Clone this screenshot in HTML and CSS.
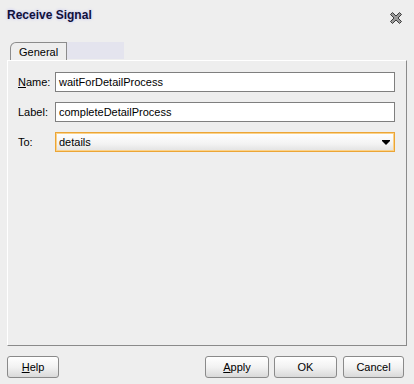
FILE: index.html
```html
<!DOCTYPE html>
<html lang="en">
<head>
    <meta charset="UTF-8">
    <title>Receive Signal</title>
    <link rel="stylesheet" href="styles.css">
</head>
<body>
    <div class="dialog">
        <!-- Barra de título -->
        <div class="titlebar">
            <span class="title">Receive Signal</span>
            <svg class="close" width="14" height="14" viewBox="0 0 14 14">
                <path d="M1.5 3.5 L3.5 1.5 L7 5 L10.5 1.5 L12.5 3.5 L9 7 L12.5 10.5 L10.5 12.5 L7 9 L3.5 12.5 L1.5 10.5 L5 7 Z" fill="#9a9a9a" stroke="#3c3c3c" stroke-width="1"/>
            </svg>
        </div>

        <!-- Pestañas -->
        <div class="tabs">
            <div class="tab">General</div>
            <div class="tab-fill"></div>
        </div>

        <!-- Panel principal -->
        <div class="panel">
            <div class="form">
                <label class="field-label"><u>N</u>ame:</label>
                <div class="input">waitForDetailProcess</div>

                <label class="field-label">Label:</label>
                <div class="input">completeDetailProcess</div>

                <label class="field-label">To:</label>
                <div class="select">
                    <span>details</span>
                    <svg width="8" height="5" viewBox="0 0 8 5">
                        <path d="M0 0 H8 V1 L4 5 L0 1 Z" fill="#000"/>
                    </svg>
                </div>
            </div>
        </div>

        <!-- Botones -->
        <div class="buttons">
            <button class="btn btn-help"><u>H</u>elp</button>
            <div class="spacer"></div>
            <button class="btn btn-apply"><u>A</u>pply</button>
            <button class="btn btn-ok">OK</button>
            <button class="btn btn-cancel">Cancel</button>
        </div>
    </div>
</body>
</html>
```

FILE: styles.css
```css
/* Estilos generales */
body {
    margin: 0;
    background-color: #eeeeee;
    font-family: 'Liberation Sans', Arial, sans-serif;
    font-size: 11px;
    color: #000;
}

.dialog {
    width: 414px;
    height: 384px;
    box-sizing: border-box;
    padding: 0 7px 0 7px;
    display: flex;
    flex-direction: column;
}

/* Barra de título */
.titlebar {
    height: 42px;
    display: flex;
    justify-content: space-between;
    align-items: flex-start;
    padding-top: 8px;
    box-sizing: border-box;
}

.title {
    font-size: 12px;
    font-weight: bold;
    color: #10103a;
    text-shadow: 0 0 3px rgba(120, 120, 255, 0.45);
}

.close {
    margin-top: 3px;
    margin-right: 4px;
}

/* Pestañas */
.tabs {
    display: flex;
    height: 18px;
    margin-left: 3px;
}

.tab {
    width: 57px;
    box-sizing: border-box;
    border: 1px solid #8c8c8c;
    border-bottom: none;
    border-top-left-radius: 6px;
    background-color: #eeeeee;
    padding: 2px 0 0 8px;
    line-height: 14px;
}

.tab-fill {
    width: 57px;
    height: 17px;
    background-color: #e4e4ee;
}

/* Panel */
.panel {
    height: 286px;
    box-sizing: border-box;
    border-top: 1px solid #ffffff;
    border-left: 1px solid #ffffff;
    border-right: 1px solid #8a8a8a;
    border-bottom: 1px solid #8a8a8a;
    padding: 11px 11px 0 10px;
}

.form {
    display: grid;
    grid-template-columns: 37px 1fr;
    row-gap: 10px;
    align-items: center;
}

.field-label {
    line-height: 20px;
}

.input {
    height: 20px;
    box-sizing: border-box;
    border: 1px solid #7f7f7f;
    background-color: #fff;
    padding: 0 3px;
    line-height: 18px;
}

.select {
    height: 20px;
    box-sizing: border-box;
    border: 1px solid #eba536;
    box-shadow: inset 0 0 0 1px #fbd28a;
    background: linear-gradient(#ffffff, #f3f3f3 60%, #e2e2e2);
    padding: 0 4px 0 3px;
    line-height: 18px;
    display: flex;
    justify-content: space-between;
    align-items: center;
}

/* Botones */
.buttons {
    display: flex;
    gap: 5px;
    margin-top: 10px;
    padding-right: 3px;
}

.spacer {
    flex: 1;
}

.btn {
    height: 22px;
    border: 1px solid #8a8a8a;
    border-radius: 3px;
    background: linear-gradient(#ffffff, #f2f2f2 50%, #d9d9d9);
    font-family: 'Liberation Sans', Arial, sans-serif;
    font-size: 11px;
    color: #000;
    padding: 0;
}

.btn-help {
    width: 52px;
}

.btn-apply {
    width: 64px;
}

.btn-ok {
    width: 63px;
    margin-right: 1px;
}

.btn-cancel {
    width: 61px;
}
```
